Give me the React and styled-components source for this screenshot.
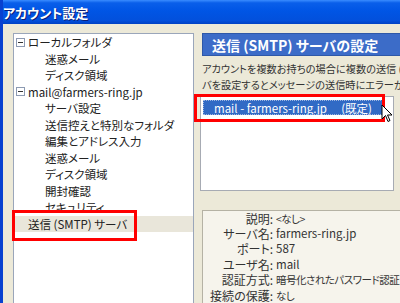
import React from 'react';
import styled, { createGlobalStyle } from 'styled-components';

const GlobalStyle = createGlobalStyle`
    html, body {
        margin: 0;
        padding: 0;
        width: 400px;
        height: 303px;
        overflow: hidden;
        background: #ECE9D8;
    }
    * { box-sizing: border-box; }
`;

const jp = `"Noto Sans CJK JP", "Noto Sans", sans-serif`;

const Window = styled.div`
    position: relative;
    width: 400px;
    height: 303px;
    display: flex;
    flex-direction: column;
    border-left: 3px solid #0841D0;
    background: #ECE9D8;
    overflow: hidden;
    font-family: ${jp};
    font-feature-settings: "palt";
`;

const TitleBar = styled.div`
    height: 24px;
    flex: none;
    display: flex;
    align-items: center;
    padding-left: 3px;
    margin-left: -3px;
    background: linear-gradient(to bottom, #3A8CFF 0%, #0A5FEA 12%, #0055E5 45%, #0250DC 85%, #0041C4 100%);
    color: #fff;
    font-weight: bold;
    font-size: 13px;
    text-shadow: 1px 1px 0 #0A1E78;
`;

const Body = styled.div`
    flex: 1;
    display: flex;
    padding: 9px 0 0 10px;
    min-height: 0;
`;

const TreePanel = styled.div`
    width: 181px;
    flex: none;
    background: #fff;
    border: 1px solid #9AA6BA;
    border-bottom: none;
`;

const TreeRow = styled.div`
    height: 16.5px;
    display: flex;
    align-items: center;
    padding-left: ${p => (p.child ? 31 : 2)}px;
    font-size: 11.5px;
    color: #222;
    white-space: nowrap;
    background: ${p => (p.selected ? '#E9E6DA' : 'transparent')};
`;

const Toggle = styled.span`
    width: 9px;
    height: 9px;
    border: 1px solid #8C9AB2;
    margin-right: 3px;
    display: flex;
    align-items: center;
    justify-content: center;
    background: #fff;
    &::after {
        content: '';
        width: 5px;
        height: 1px;
        background: #333;
    }
`;

const Spacer = styled.span`
    width: 12px;
`;

const RightPane = styled.div`
    width: 260px;
    flex: none;
    margin-left: 7px;
    display: flex;
    flex-direction: column;
`;

const Header = styled.div`
    height: 24px;
    margin-left: 1px;
    background: #3C6CC8;
    border: 1px solid #2E58A8;
    border-right: none;
    color: #fff;
    font-weight: bold;
    font-size: 14px;
    display: flex;
    align-items: center;
    padding-left: 9px;
    white-space: nowrap;
`;

const Desc = styled.div`
    margin-top: 5px;
    margin-left: 1px;
    font-size: 10.2px;
    line-height: 16px;
    color: #333;
    white-space: nowrap;
`;

const ListBox = styled.div`
    width: 194px;
    height: 97px;
    margin-top: 3px;
    margin-left: -1px;
    background: #fff;
    border: 1px solid #A7ABB3;
    padding: 3px 8px 0 2px;
`;

const ListItem = styled.div`
    height: 15px;
    display: flex;
    align-items: center;
    justify-content: space-between;
    padding: 0 13px 0 11px;
    background: #316AC5;
    outline: 1px dotted #9DB5E0;
    outline-offset: -1px;
    color: #fff;
    font-size: 11.5px;
    white-space: nowrap;
`;

const Details = styled.div`
    margin-top: 19px;
    margin-left: 1px;
    flex: 1;
    background: #F6F4EC;
    border: 1px solid #B5B2A4;
    border-right: none;
    border-bottom: none;
    display: grid;
    grid-template-columns: 70px 1fr;
    grid-auto-rows: 15.4px;
    column-gap: 3px;
    align-content: start;
    color: #333;
`;

const Label = styled.span`
    text-align: right;
    white-space: nowrap;
    line-height: 15.4px;
    font-size: 12px;
`;

const Value = styled.span`
    white-space: nowrap;
    line-height: 15.4px;
    font-size: ${p => (p.latin ? '11.5px' : '10.5px')};
    letter-spacing: ${p => (p.latin ? '0' : '-0.5px')};
`;

const Mark = styled.div`
    position: absolute;
    left: ${p => p.x}px;
    top: ${p => p.y}px;
    width: ${p => p.w}px;
    height: ${p => p.h}px;
    border: 3px solid #FF0000;
    pointer-events: none;
`;

const Cursor = styled.svg`
    position: absolute;
    left: 378px;
    top: 104px;
`;

const tree = [
    { text: 'ローカルフォルダ', root: true },
    { text: '迷惑メール' },
    { text: 'ディスク領域' },
    { text: 'mail@farmers-ring.jp', root: true },
    { text: 'サーバ設定' },
    { text: '送信控えと特別なフォルダ' },
    { text: '編集とアドレス入力' },
    { text: '迷惑メール' },
    { text: 'ディスク領域' },
    { text: '開封確認' },
    { text: 'セキュリティ' },
    { text: '送信 (SMTP) サーバ', root: true, leaf: true, selected: true },
];

const details = [
    ['説明:', '<なし>'],
    ['サーバ名:', 'farmers-ring.jp', true],
    ['ポート:', '587', true],
    ['ユーザ名:', 'mail', true],
    ['認証方式:', '暗号化されたパスワード認証'],
    ['接続の保護:', 'なし'],
];

export default function App() {
    return (
        <Window>
            <GlobalStyle />
            <TitleBar>アカウント設定</TitleBar>
            <Body>
                <TreePanel>
                    {tree.map((t, i) => (
                        <TreeRow key={i} child={!t.root} selected={t.selected}>
                            {t.root && !t.leaf && <Toggle />}
                            {t.leaf && <Spacer />}
                            {t.text}
                        </TreeRow>
                    ))}
                </TreePanel>
                <RightPane>
                    <Header>送信 (SMTP) サーバの設定</Header>
                    <Desc>
                        アカウントを複数お持ちの場合に複数の送信 (SMTP) サー<br />
                        バを設定するとメッセージの送信時にエラーが発生する
                    </Desc>
                    <ListBox>
                        <ListItem>
                            <span>mail - farmers-ring.jp</span>
                            <span>(既定)</span>
                        </ListItem>
                    </ListBox>
                    <Details>
                        {details.map(([l, v, latin]) => (
                            <React.Fragment key={l}>
                                <Label>{l}</Label>
                                <Value latin={latin}>{v}</Value>
                            </React.Fragment>
                        ))}
                    </Details>
                </RightPane>
            </Body>
            <Mark x={9} y={210} w={125} h={31} />
            <Mark x={191} y={94} w={191} h={28} />
            <Cursor width="12" height="19" viewBox="0 0 12 19">
                <path d="M1 1 L1 15 L4.5 11.5 L7 17.5 L9 16.5 L6.5 11 L11 11 Z" fill="#fff" stroke="#000" strokeWidth="1" />
            </Cursor>
        </Window>
    );
}
